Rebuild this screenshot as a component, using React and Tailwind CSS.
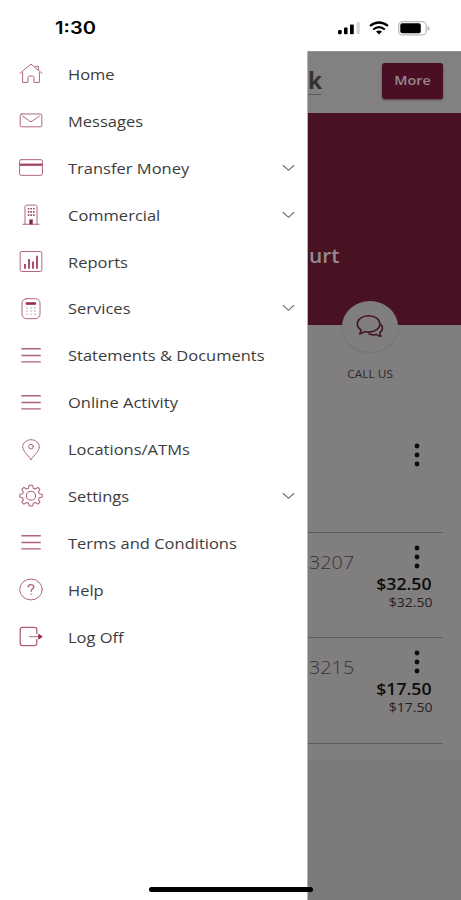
const MenuIcon = ({ name }) => {
    return (
        <svg viewBox="0 0 24 24" preserveAspectRatio="none" className="mx-px w-6 h-[23px] shrink-0" fill="none" stroke="#ad6378" strokeWidth="1" strokeLinecap="round" strokeLinejoin="round">
            {name === "home" && (
                <>
                    <path d="M1 11.8 12 2.2l11 9.600" />
                    <path d="M3.600 11v10.300h5.400v-5.200q0-1.400 1.400-1.400h3.200q1.400 0 1.400 1.400v5.200h5.400V11M16.500 4.500h3v3.300" />
                </>
            )}
            {name === "mail" && (
                <>
                    <rect x="1.2" y="5.2" width="21.600" height="13.400" rx="1.6" />
                    <path d="m3.6 7.4 7.3 5.4q1.100.8 2.200 0l7.300-5.400" />
                </>
            )}
            {name === "card" && (
                <>
                    <rect x="0.6" y="3.8" width="22.800" height="16.400" rx="1.6" />
                    <path d="M0.600 9.1h22.800" strokeWidth="2.4" stroke="#a04660" strokeLinecap="butt" />
                </>
            )}
            {name === "building" && (
                <>
                    <path d="M4 22.2h16M6 22V3.7q0-1.5 1.5-1.5h9q1.5 0 1.5 1.5V22" />
                    <path d="M8.800 6h1.600M11.4 6H13M14 6h1.600M8.800 9.3h1.600M11.4 9.3H13M14 9.3h1.600M8.800 12.600h1.600M11.400 12.600H13M14 12.600h1.600" strokeWidth="1.8" stroke="#9c4a62" strokeLinecap="butt" />
                    <path d="M10.600 22v-4.500h3V22z" fill="#7c2340" />
                </>
            )}
            {name === "chart" && (
                <>
                    <rect x="1.2" y="1.6" width="21.600" height="20.800" rx="1.2" />
                    <path d="M6 19.5v-5M10 19.5V9.500M14 19.500v-7.500M18 19.500V6" strokeWidth="1.900" stroke="#a84a65" strokeLinecap="butt" />
                </>
            )}
            {name === "calculator" && (
                <>
                    <rect x="3" y="1.800" width="18" height="20.800" rx="4.500" />
                    <rect x="7.400" y="6" width="9.200" height="1.600" fill="#96304f" stroke="#96304f" />
                    <path d="M8 11.4v.1M12 11.4v.1M16 11.4v.1M8 14.6v.1M12 14.6v.1M16 14.6v.1M8 17.8v.1M12 17.8v.1M16 17.8v.1" strokeWidth="1.4" stroke="#b98a9a" />
                </>
            )}
            {name === "lines" && <path d="M2.400 5h19.400M2.400 12h19.400M2.400 18.700h19.400" strokeWidth="1.4" strokeLinecap="butt" />}
            {name === "pin" && (
                <>
                    <path d="M12 22.4C8 17 3.700 13.300 3.700 9.300 3.700 5.200 7.400 1.800 12 1.800s8.300 3.400 8.300 7.500c0 4-4.300 7.700-8.300 13.100z" />
                    <circle cx="12" cy="9" r="2.4" />
                </>
            )}
            {name === "gear" && (
                <g transform="translate(-0.900 -0.900) scale(1.075)">
                    <path d="m10.300 2-.6 2.900-1.800.8-2.500-1.600-1.900 2 1.400 2.400-.8 1.900-2.500.6v2.500l2.500.6.8 1.900-1.400 2.400 1.900 2 2.500-1.600 1.800.8.6 2.600h3.200l.6-2.600 1.800-.8 2.500 1.600 1.900-2-1.400-2.400.8-1.900 2.700-.6V11l-2.700-.6-.8-1.900 1.400-2.400-1.900-2-2.500 1.600-1.800-.8-.6-2.900z" />
                    <circle cx="12" cy="12.200" r="4.300" />
                </g>
            )}
            {name === "help" && (
                <>
                    <ellipse cx="12" cy="12" rx="11.300" ry="10.900" />
                    <path d="M9.200 9.300Q9.300 6.900 12 6.900t2.800 2.300c0 1.900-2.700 2.300-2.700 4.700M12.100 16.600v.3" strokeWidth="1.400" />
                </>
            )}
            {name === "logoff" && (
                <>
                    <path d="M17.800 9V5q0-2.500-2.300-2.500h-12Q1.200 2.500 1.200 5v14q0 2.500 2.300 2.500h12q2.300 0 2.300-2.500v-4" strokeWidth="1.300" />
                    <path d="M10.600 12.200H21" />
                    <path d="m20 10 3.200 2.200L20 14.400z" fill="#96304f" stroke="#96304f" />
                </>
            )}
        </svg>
    )
}

const menuItems = [
    { label: "Home", icon: "home" },
    { label: "Messages", icon: "mail" },
    { label: "Transfer Money", icon: "card", more: true },
    { label: "Commercial", icon: "building", more: true },
    { label: "Reports", icon: "chart" },
    { label: "Services", icon: "calculator", more: true },
    { label: "Statements & Documents", icon: "lines" },
    { label: "Online Activity", icon: "lines" },
    { label: "Locations/ATMs", icon: "pin" },
    { label: "Settings", icon: "gear", more: true },
    { label: "Terms and Conditions", icon: "lines" },
    { label: "Help", icon: "help" },
    { label: "Log Off", icon: "logoff" },
];

const StatusBar = () => {
    return (
        <header className="flex h-[51px] shrink-0 items-center bg-white pl-[55px] pr-[31px] pt-[5px]">
            <span className="mr-auto origin-left scale-x-[1.18] font-['Inter'] text-[17px] font-semibold leading-6 text-black">1:30</span>
            <svg viewBox="0 0 24 14" className="w-6 h-3.5 mr-[7px]">
                <rect x="0" y="9" width="3.700" height="4.300" rx="1.200" />
                <rect x="6" y="6.500" width="3.600" height="6.800" rx="1" />
                <rect x="12" y="3.500" width="3.800" height="9.800" rx="1" />
                <rect x="18.600" y="1" width="3.200" height="12.300" rx="1" fill="#d5d5d5" />
            </svg>
            <svg viewBox="0 0 20 14" className="w-5 h-3.5 mr-[9px]" fill="none" stroke="#000" strokeWidth="2.200">
                <path d="M1 5Q10-2 19 5M4.200 8.500Q10 3.900 15.800 8.500" />
                <path d="M10 13.400 7 10.600Q10 8.600 13 10.600z" fill="#000" stroke="none" />
            </svg>
            <svg viewBox="0 0 32 15" className="w-8 h-[15px]">
                <rect x="0.700" y="0.700" width="27.500" height="13.200" rx="4" fill="#fff" stroke="#bcbcbc" strokeWidth="1.300" />
                <rect x="2.300" y="2.300" width="20.500" height="10" rx="2" />
                <path d="M29.500 4.800q2.300 1 2.300 2.600t-2.300 2.600z" fill="#bcbcbc" />
            </svg>
        </header>
    )
}

const Drawer = () => {
    return (
        <nav className="w-[308px] shrink-0 border-r border-[#b5b3b4] bg-white">
            {
                menuItems.map(({ label, icon, more }) => (
                    <div key={label} className="flex h-[46.900px] items-center pb-px pl-[18px] pr-3">
                        <MenuIcon name={icon} />
                        <span className="ml-6 origin-left scale-x-[1.1] whitespace-nowrap text-[15px] leading-6 text-[#3c3c3c]">{label}</span>
                        {more && (
                            <svg viewBox="0 0 14 8" className="ml-auto w-[13px] h-2" fill="none" stroke="#666" strokeWidth="1.200">
                                <path d="m1 1 6 5.500L13 1" />
                            </svg>
                        )}
                    </div>
                ))
            }
        </nav>
    )
}

const Dots = () => {
    return (
        <svg viewBox="0 0 6 24" className="w-1.5 h-6 shrink-0" fill="#0c0c0c">
            <circle cx="3" cy="3" r="2.400" />
            <circle cx="3" cy="12" r="2.400" />
            <circle cx="3" cy="21" r="2.400" />
        </svg>
    )
}

const Account = ({ number, amount }) => {
    return (
        <div className="flex h-[105.500px] border-b border-[#5f5d5e] pt-3">
            <span className="ml-px origin-left scale-x-[1.1] pt-[3px] text-[18px] font-light leading-7 text-[#353334]">{number}</span>
            <div className="ml-auto flex flex-col items-end pr-[11px]">
                <span className="mr-[12px] flex"><Dots /></span>
                <span className="mt-[5px] origin-right scale-x-[1.140] text-[15.500px] font-semibold leading-5 text-[#0c0c0c]">{amount}</span>
                <span className="origin-right scale-x-[1.170] pt-px text-[12px] leading-4 text-[#222]">{amount}</span>
            </div>
        </div>
    )
}

const AccountPage = () => {
    return (
        <main className="flex min-w-0 flex-1 flex-col overflow-hidden bg-[#7b797a]">
            <div className="flex h-[62px] items-start justify-between bg-[#828081] pr-[18px] pt-[11px] border-t border-[#969495]">
                <div className="mt-1 w-[13px] border-b border-[#5c5a5b]">
                    <span className="block text-[22.500px] font-bold leading-[27px] text-[#333132]">k</span>
                </div>
                <button className="flex h-9 w-[61px] items-center justify-center rounded-[3px] bg-[#4b0f25] pb-[3px] shadow-[0_1px_2px_rgba(40,0,15,0.5)]">
                    <span className="scale-x-[1.1] text-[13px] font-semibold leading-5 text-[#9a8990]">More</span>
                </button>
            </div>
            <div className="h-[212px] bg-[#491223] pt-[129px]">
                <span className="ml-px block origin-left scale-x-[1.1] text-[19px] font-semibold leading-7 text-[#938a8d]">urt</span>
            </div>
            <div className="h-[435px] bg-[#807e7f] pr-[18px]">
                <div className="relative -mt-6 ml-[34px] flex w-14 flex-col items-center">
                    <div className="flex h-[51px] w-14 items-center justify-center rounded-[50%] bg-[#807e7f] pb-0.5 shadow-[0_1px_2px_rgba(0,0,0,0.12)]">
                        <svg viewBox="0 0 28 24" className="w-7 h-6" fill="none" stroke="#421426" strokeWidth="1.600" strokeLinejoin="round">
                            <path d="M5 15.800C2.700 14.300 1.300 12.200 1.300 9.900 1.300 5.300 6.300 1.700 12.600 1.700s11.300 3.600 11.300 8.200-5 8.200-11.300 8.200c-1.500 0-2.900-.2-4.200-.6Q6.500 19.600 3.600 19.900 5 18 5 15.800z" />
                            <path d="M25.200 10.500c1.900 3 1.200 6.300-1.500 8.500q0 2 1.300 3.300-2.800 0-4.500-1.800-4.200 1-8-.7" />
                        </svg>
                    </div>
                    <span className="mt-[14px] scale-x-[1.08] whitespace-nowrap text-[11px] leading-4 text-[#2a2829]">CALL US</span>
                </div>
                <div className="mt-[61px] flex h-[89.500px] justify-end border-b border-[#5f5d5e] pr-[23px]">
                    <Dots />
                </div>
                <Account number="3207" amount="$32.50" />
                <Account number="3215" amount="$17.50" />
            </div>
        </main>
    )
}

const App = () => {
    return (
        <div className="relative flex h-[900px] w-[461px] flex-col overflow-hidden bg-white font-['Open_Sans',sans-serif]">
            <StatusBar />
            <div className="flex min-h-0 flex-1">
                <Drawer />
                <AccountPage />
            </div>
            <div className="absolute bottom-[8px] left-[149px] h-[5.500px] w-[164px] rounded-full bg-black"></div>
        </div>
    )
}

export default App;
